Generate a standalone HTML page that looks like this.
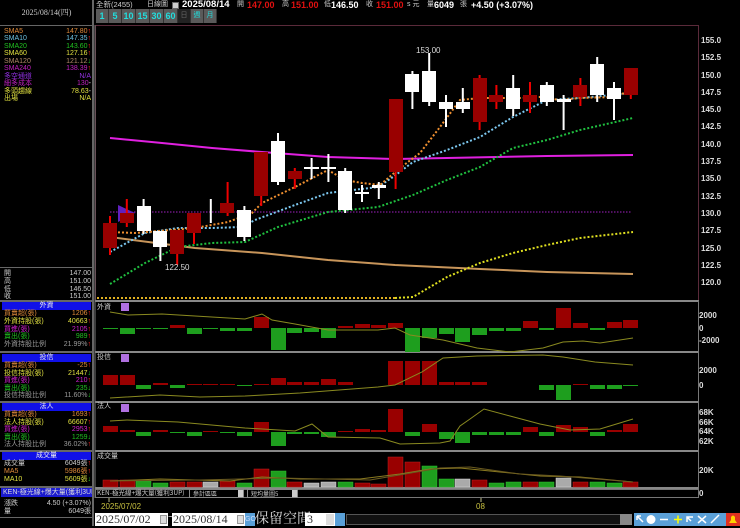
<!DOCTYPE html>
<html><head><meta charset="utf-8">
<style>
*{margin:0;padding:0;box-sizing:border-box}
body{width:740px;height:526px;background:#000;overflow:hidden;position:relative;font-family:"Liberation Sans","Noto Sans CJK TC",sans-serif;color:#ddd}
.a{position:absolute;white-space:nowrap}
.lp{position:absolute;left:0;width:93px;font-size:7px;line-height:7px}
.row{position:absolute;left:2px;right:2px;height:7px}
.row .l{position:absolute;left:2px}
.row .r{position:absolute;right:0}
.up{color:#f22}.dn{color:#2c2}
.bh{position:absolute;left:2px;right:2px;height:8px;background:#1010e8;color:#eee;text-align:center;font-size:7px;line-height:8px}
.btn{position:absolute;top:9px;height:14px;background:#5a5a5a;color:#2dd;font-weight:bold;font-size:9px;line-height:14px;text-align:center;border-right:1px solid #333}
.hv{position:absolute;top:0;font-size:9px;font-weight:bold;line-height:10px;white-space:nowrap}
.hl{position:absolute;top:1px;font-size:7px;color:#ccc;line-height:8px}
</style></head><body>

<div class="a" style="left:0;top:0;width:94px;height:526px;border-right:2px solid #666"></div>
<div class="a" style="left:0;top:25px;width:93px;height:1px;background:#666"></div>
<div class="lp" style="top:9px;text-align:center;color:#ccc;font-size:8px;font-family:'Liberation Serif','Noto Serif CJK SC',serif">2025/08/14(四)</div>

<div class="lp" style="top:0;height:110px">
<div class="row" style="top:28px;color:#e08a3a"><span class="l">SMA5</span><span class="r">147.80<span class="up">↑</span></span></div>
<div class="row" style="top:35px;color:#6cc0e0"><span class="l">SMA10</span><span class="r">147.35<span class="up">↑</span></span></div>
<div class="row" style="top:43px;color:#20c020"><span class="l">SMA20</span><span class="r">143.60<span class="up">↑</span></span></div>
<div class="row" style="top:50px;color:#e0e040"><span class="l">SMA60</span><span class="r">127.16<span class="up">↑</span></span></div>
<div class="row" style="top:58px;color:#b08868"><span class="l">SMA120</span><span class="r">121.12<span class="dn">↓</span></span></div>
<div class="row" style="top:65px;color:#c020c0"><span class="l">SMA240</span><span class="r">138.39<span class="up">↑</span></span></div>
<div class="row" style="top:73px;color:#9030e0"><span class="l">多空通道</span><span class="r">N/A</span></div>
<div class="row" style="top:80px;color:#c020c0"><span class="l">細多成本</span><span class="r">130<span style="color:#ddd">-</span></span></div>
<div class="row" style="top:88px;color:#e0e040"><span class="l">多頭趨線</span><span class="r">78.63<span style="color:#ddd">-</span></span></div>
<div class="row" style="top:95px;color:#e0e040"><span class="l">出場</span><span class="r">N/A</span></div>
</div>

<div class="a" style="left:0;top:267px;width:93px;height:1px;background:#666"></div>
<div class="lp" style="top:0">
<div class="row" style="top:270px;color:#ccc"><span class="l">開</span><span class="r">147.00</span></div>
<div class="row" style="top:278px;color:#ccc"><span class="l">高</span><span class="r">151.00</span></div>
<div class="row" style="top:286px;color:#ccc"><span class="l">低</span><span class="r">146.50</span></div>
<div class="row" style="top:293px;color:#ccc"><span class="l">收</span><span class="r">151.00</span></div>
</div>

<div class="a" style="left:0;top:300px;width:93px;height:2px;background:#666"></div>
<div class="lp" style="top:0">
<div class="bh" style="top:302px">外資</div>
<div class="row" style="top:310px;color:#e08a3a"><span class="l">買賣超(張)</span><span class="r">1206<span class="up">↑</span></span></div>
<div class="row" style="top:318px;color:#e0e040"><span class="l">外資持股(張)</span><span class="r">40663<span class="up">↑</span></span></div>
<div class="row" style="top:326px;color:#d020d0"><span class="l">買進(張)</span><span class="r">2105<span class="up">↑</span></span></div>
<div class="row" style="top:333px;color:#20c020"><span class="l">賣出(張)</span><span class="r">989<span class="up">↑</span></span></div>
<div class="row" style="top:341px;color:#999"><span class="l">外資持股比例</span><span class="r">21.99%<span class="up">↑</span></span></div>
</div>
<div class="a" style="left:0;top:351px;width:93px;height:2px;background:#666"></div>
<div class="lp" style="top:0">
<div class="bh" style="top:354px">投信</div>
<div class="row" style="top:362px;color:#e08a3a"><span class="l">買賣超(張)</span><span class="r">-25<span class="up">↑</span></span></div>
<div class="row" style="top:370px;color:#e0e040"><span class="l">投信持股(張)</span><span class="r">21447<span class="dn">↓</span></span></div>
<div class="row" style="top:377px;color:#d020d0"><span class="l">買進(張)</span><span class="r">210<span class="up">↑</span></span></div>
<div class="row" style="top:385px;color:#20c020"><span class="l">賣出(張)</span><span class="r">235<span class="dn">↓</span></span></div>
<div class="row" style="top:392px;color:#999"><span class="l">投信持股比例</span><span class="r">11.60%<span class="dn">↓</span></span></div>
</div>
<div class="a" style="left:0;top:401px;width:93px;height:2px;background:#666"></div>
<div class="lp" style="top:0">
<div class="bh" style="top:403px">法人</div>
<div class="row" style="top:411px;color:#e08a3a"><span class="l">買賣超(張)</span><span class="r">1693<span class="up">↑</span></span></div>
<div class="row" style="top:419px;color:#e0e040"><span class="l">法人持股(張)</span><span class="r">66607<span class="up">↑</span></span></div>
<div class="row" style="top:426px;color:#d020d0"><span class="l">買進(張)</span><span class="r">2953<span class="up">↑</span></span></div>
<div class="row" style="top:434px;color:#20c020"><span class="l">賣出(張)</span><span class="r">1259<span class="dn">↓</span></span></div>
<div class="row" style="top:441px;color:#999"><span class="l">法人持股比例</span><span class="r">36.02%<span class="up">↑</span></span></div>
</div>
<div class="a" style="left:0;top:450px;width:93px;height:2px;background:#666"></div>
<div class="lp" style="top:0">
<div class="bh" style="top:452px">成交量</div>
<div class="row" style="top:460px;color:#ccc"><span class="l">成交量</span><span class="r">6049張<span class="up">↑</span></span></div>
<div class="row" style="top:468px;color:#e08a3a"><span class="l">MA5</span><span class="r">5986張<span class="up">↑</span></span></div>
<div class="row" style="top:476px;color:#e0e040"><span class="l">MA10</span><span class="r">5609張<span class="dn">↓</span></span></div>
</div>
<div class="a" style="left:0;top:486px;width:93px;height:2px;background:#666"></div>
<div class="lp" style="top:0">
<div class="a" style="left:1px;top:488px;width:91px;height:9px;background:#1a1ad0;color:#ddd;font-size:7px;line-height:9px;padding-left:2px;overflow:hidden">KEN-極光線+爆大量(獲利3UP)</div>
<div class="row" style="top:500px;color:#ccc"><span class="l">漲跌</span><span class="r">4.50 (+3.07%)</span></div>
<div class="row" style="top:508px;color:#ccc"><span class="l">量</span><span class="r">6049張</span></div>
</div>
<div class="a" style="left:0;top:517px;width:93px;height:1px;background:#666"></div>

<!-- header -->
<div class="a" style="left:96px;top:0px;font-size:7.5px;line-height:9px;color:#ccc">全新(2455)</div>
<div class="hl" style="left:147px">日線圖</div>
<div class="a" style="left:172px;top:2px;width:7px;height:7px;background:#ccc;border:1px solid #666"></div>
<div class="hv" style="left:182px;color:#fff;font-size:9.5px">2025/08/14</div>
<div class="hl" style="left:237px">開</div>
<div class="hv" style="left:247px;color:#e01010">147.00</div>
<div class="hl" style="left:282px">高</div>
<div class="hv" style="left:291px;color:#e01010">151.00</div>
<div class="hl" style="left:324px">低</div>
<div class="hv" style="left:331px;color:#fff">146.50</div>
<div class="hl" style="left:366px">收</div>
<div class="hv" style="left:376px;color:#e01010">151.00</div>
<div class="hl" style="left:407px">s 元</div>
<div class="hl" style="left:427px">量</div>
<div class="hv" style="left:434px;color:#fff">6049</div>
<div class="hl" style="left:460px">張</div>
<div class="hv" style="left:471px;color:#fff">+4.50 (+3.07%)</div>

<div class="btn" style="left:96px;width:13px">1</div>
<div class="btn" style="left:109px;width:13px">5</div>
<div class="btn" style="left:122px;width:14px">10</div>
<div class="btn" style="left:136px;width:14px">15</div>
<div class="btn" style="left:150px;width:14px">30</div>
<div class="btn" style="left:164px;width:14px">60</div>
<div class="btn" style="left:178px;width:13px;background:#222;color:#666;font-size:7px;font-weight:normal">日</div>
<div class="btn" style="left:191px;width:13px;font-size:7px;font-weight:normal">週</div>
<div class="btn" style="left:204px;width:13px;font-size:7px;font-weight:normal">月</div>

<svg class="a" style="left:0;top:0" width="740" height="526">
<rect x="95.5" y="25.5" width="603" height="275" fill="none" stroke="#5a2a3a"/>
<line x1="95" y1="301" x2="699" y2="301" stroke="#888" stroke-width="2"/>
<line x1="95" y1="352" x2="699" y2="352" stroke="#888" stroke-width="2"/>
<line x1="95" y1="402" x2="699" y2="402" stroke="#888" stroke-width="2"/>
<line x1="95" y1="451" x2="699" y2="451" stroke="#888" stroke-width="2"/>
<line x1="95" y1="488" x2="699" y2="488" stroke="#888" stroke-width="2"/>
<rect x="95.5" y="489.5" width="603" height="8" fill="none" stroke="#777"/>
<line x1="95" y1="25" x2="95" y2="498" stroke="#777"/>
<line x1="698.5" y1="301" x2="698.5" y2="498" stroke="#777"/>

<polyline fill="none" stroke="#e020e0" stroke-width="2" points="110,138 162,143 212,148 262,152 328,157 395,159 447,158 547,156 633,155"/>
<polyline fill="none" stroke="#c8955a" stroke-width="2" points="110,237 195,248 262,253 328,260 395,265 480,269 547,272 633,274"/>
<line x1="110" y1="212" x2="632" y2="212" stroke="#a020c0" stroke-dasharray="1.5 1.5"/>
<line x1="97" y1="298" x2="395" y2="298" stroke="#e0b020" stroke-width="2" stroke-dasharray="2 2"/>
<polyline fill="none" stroke="#e0e020" stroke-width="2" stroke-dasharray="2 2" points="395,298 413,297 447,277 480,263 513,253 547,245 580,238 633,232"/>
<polyline fill="none" stroke="#20c040" stroke-width="2" stroke-dasharray="2 2" points="110,284 145,263 178,247 212,243 245,242 278,227 328,212 378,207 413,195 447,180 480,167 513,148 547,140 580,130 633,118"/>
<polyline fill="none" stroke="#7cc8f0" stroke-width="2" stroke-dasharray="2 2" points="110,252 145,233 178,228 212,228 242,227 255,220 295,205 328,193 378,187 393,177 413,162 447,150 480,137 513,117 547,100 580,98 633,93"/>
<polyline fill="none" stroke="#f09030" stroke-width="2" stroke-dasharray="2 2" points="110,232 135,233 195,228 228,222 252,213 262,203 295,187 328,170 345,180 362,183 380,185 400,168 420,153 440,127 460,100 480,98 520,98 540,97 560,100 580,98 613,97 633,90"/>
<polygon points="118,205 135,213 118,222" fill="#6020c0"/>

<g stroke-width="2">
<line x1="110" y1="216" x2="110" y2="255" stroke="#e00"/><rect x="103" y="223" width="14" height="25" fill="#990000"/>
<line x1="126.8" y1="199" x2="126.8" y2="227" stroke="#e00"/><rect x="120" y="213" width="14" height="10" fill="#990000"/>
<line x1="143.6" y1="199" x2="143.6" y2="234" stroke="#fff"/><rect x="137" y="206" width="14" height="25" fill="#fff"/>
<line x1="160.4" y1="231" x2="160.4" y2="261" stroke="#fff"/><rect x="153" y="231" width="14" height="16" fill="#fff"/>
<line x1="177.2" y1="230" x2="177.2" y2="265" stroke="#e00"/><rect x="170" y="230" width="14" height="24" fill="#990000"/>
<line x1="194" y1="213" x2="194" y2="244" stroke="#e00"/><rect x="187" y="213" width="14" height="20" fill="#990000"/>
<line x1="210.8" y1="199" x2="210.8" y2="223" stroke="#fff"/>
<line x1="227.6" y1="182" x2="227.6" y2="216" stroke="#e00"/><rect x="220" y="203" width="14" height="10" fill="#990000"/>
<line x1="244.4" y1="206" x2="244.4" y2="241" stroke="#fff"/><rect x="237" y="210" width="14" height="27" fill="#fff"/>
<line x1="261.2" y1="152" x2="261.2" y2="206" stroke="#e00"/><rect x="254" y="152" width="14" height="44" fill="#990000"/>
<line x1="278" y1="133" x2="278" y2="185" stroke="#fff"/><rect x="271" y="141" width="14" height="41" fill="#fff"/>
<line x1="294.8" y1="168" x2="294.8" y2="189" stroke="#e00"/><rect x="288" y="171" width="14" height="8" fill="#990000"/>
<line x1="311.6" y1="158" x2="311.6" y2="179" stroke="#fff"/><rect x="304" y="167" width="15" height="2" fill="#fff"/>
<line x1="328.4" y1="154" x2="328.4" y2="182" stroke="#fff"/><rect x="321" y="167" width="15" height="2" fill="#fff"/>
<line x1="345.2" y1="168" x2="345.2" y2="213" stroke="#fff"/><rect x="338" y="171" width="14" height="39" fill="#fff"/>
<line x1="362" y1="185" x2="362" y2="202" stroke="#fff"/><rect x="355" y="192" width="14" height="2" fill="#fff"/>
<line x1="378.8" y1="182" x2="378.8" y2="199" stroke="#fff"/><rect x="372" y="185" width="14" height="3" fill="#fff"/>
<line x1="395.6" y1="99" x2="395.6" y2="189" stroke="#e00"/><rect x="389" y="99" width="14" height="73" fill="#990000"/>
<line x1="412.4" y1="71" x2="412.4" y2="109" stroke="#fff"/><rect x="405" y="74" width="14" height="18" fill="#fff"/>
<line x1="429.2" y1="53" x2="429.2" y2="106" stroke="#fff"/><rect x="422" y="71" width="14" height="31" fill="#fff"/>
<line x1="446" y1="95" x2="446" y2="127" stroke="#fff"/><rect x="439" y="102" width="14" height="7" fill="#fff"/>
<line x1="462.8" y1="88" x2="462.8" y2="113" stroke="#fff"/><rect x="456" y="102" width="14" height="7" fill="#fff"/>
<line x1="479.6" y1="75" x2="479.6" y2="130" stroke="#e00"/><rect x="473" y="78" width="14" height="44" fill="#990000"/>
<line x1="496.4" y1="85" x2="496.4" y2="109" stroke="#e00"/><rect x="489" y="95" width="14" height="7" fill="#990000"/>
<line x1="513.2" y1="75" x2="513.2" y2="116" stroke="#fff"/><rect x="506" y="88" width="14" height="21" fill="#fff"/>
<line x1="530" y1="82" x2="530" y2="113" stroke="#e00"/><rect x="523" y="95" width="14" height="7" fill="#990000"/>
<line x1="546.8" y1="82" x2="546.8" y2="106" stroke="#fff"/><rect x="540" y="85" width="14" height="17" fill="#fff"/>
<line x1="563.6" y1="95" x2="563.6" y2="130" stroke="#fff"/><rect x="557" y="99" width="14" height="3" fill="#fff"/>
<line x1="580.4" y1="78" x2="580.4" y2="106" stroke="#e00"/><rect x="573" y="85" width="14" height="12" fill="#990000"/>
<line x1="597.2" y1="57" x2="597.2" y2="102" stroke="#fff"/><rect x="590" y="64" width="14" height="31" fill="#fff"/>
<line x1="614" y1="82" x2="614" y2="120" stroke="#fff"/><rect x="607" y="88" width="14" height="11" fill="#fff"/>
<line x1="630.8" y1="68" x2="630.8" y2="99" stroke="#e00"/><rect x="624" y="68" width="14" height="27" fill="#990000"/>
</g>
<text x="416" y="53" fill="#ddd" font-size="8" font-family="Liberation Sans">153.00</text>
<text x="165" y="270" fill="#ddd" font-size="8" font-family="Liberation Sans">122.50</text>

<g fill="#1e9e1e">
<rect x="103" y="328" width="15" height="1"/><rect x="120" y="328" width="15" height="6"/><rect x="136" y="328" width="15" height="1"/><rect x="153" y="328" width="15" height="1"/>
<rect x="187" y="328" width="15" height="6"/><rect x="203" y="328" width="15" height="1"/><rect x="220" y="328" width="15" height="3"/><rect x="237" y="328" width="15" height="3"/>
<rect x="271" y="328" width="15" height="22"/><rect x="287" y="328" width="15" height="5"/><rect x="304" y="328" width="15" height="4"/><rect x="321" y="328" width="15" height="10"/>
<rect x="405" y="328" width="15" height="24"/><rect x="422" y="328" width="15" height="10"/><rect x="439" y="328" width="15" height="6"/><rect x="455" y="328" width="15" height="14"/>
<rect x="472" y="328" width="15" height="7"/><rect x="489" y="328" width="15" height="3"/><rect x="506" y="328" width="15" height="3"/><rect x="539" y="328" width="15" height="2"/><rect x="590" y="328" width="15" height="2"/>
</g>
<g fill="#990000">
<rect x="170" y="325" width="15" height="3"/><rect x="254" y="317" width="15" height="11"/><rect x="338" y="326" width="15" height="2"/><rect x="355" y="324" width="15" height="4"/><rect x="371" y="325" width="15" height="3"/><rect x="388" y="323" width="15" height="5"/>
<rect x="523" y="321" width="15" height="7"/><rect x="556" y="308" width="15" height="20"/><rect x="573" y="323" width="15" height="5"/><rect x="607" y="322" width="15" height="6"/><rect x="623" y="320" width="15" height="8"/>
</g>
<polyline fill="none" stroke="#8a8a20" points="110,312 128,315 162,314 195,316 245,319 262,314 272,320 295,324 328,330 378,330 395,328 410,335 443,340 477,348 510,352 543,348 563,342 583,341 600,343 633,338"/>
<text x="97" y="309" fill="#ccc" font-size="7" font-family="Noto Sans CJK TC">外資</text>
<rect x="121" y="303" width="8" height="8" fill="#b070e0"/>

<g fill="#990000">
<rect x="103" y="375" width="15" height="10"/><rect x="120" y="375" width="15" height="10"/><rect x="153" y="383" width="15" height="2"/><rect x="187" y="384" width="15" height="1"/><rect x="203" y="384" width="15" height="1"/><rect x="220" y="384" width="15" height="1"/><rect x="254" y="384" width="15" height="1"/>
<rect x="271" y="378" width="15" height="7"/><rect x="287" y="382" width="15" height="3"/><rect x="304" y="382" width="15" height="3"/><rect x="321" y="379" width="15" height="6"/><rect x="338" y="382" width="15" height="3"/>
<rect x="388" y="361" width="15" height="24"/><rect x="405" y="361" width="15" height="24"/><rect x="422" y="361" width="15" height="24"/><rect x="439" y="382" width="15" height="3"/><rect x="455" y="382" width="15" height="3"/><rect x="472" y="382" width="15" height="3"/><rect x="573" y="384" width="15" height="1"/>
</g>
<g fill="#1e9e1e">
<rect x="136" y="385" width="15" height="4"/><rect x="170" y="385" width="15" height="3"/><rect x="237" y="385" width="15" height="1"/><rect x="539" y="385" width="15" height="5"/><rect x="556" y="385" width="15" height="15"/><rect x="590" y="385" width="15" height="4"/><rect x="607" y="385" width="15" height="4"/><rect x="623" y="385" width="15" height="1"/>
</g>
<polyline fill="none" stroke="#8a8a20" points="110,398 160,395 200,397 245,396 300,393 378,387 395,385 422,372 443,358 477,356 543,355 563,357 595,362 633,365"/>
<text x="97" y="359" fill="#ccc" font-size="7" font-family="Noto Sans CJK TC">投信</text>
<rect x="121" y="354" width="8" height="8" fill="#b070e0"/>

<g fill="#990000">
<rect x="103" y="426" width="15" height="6"/><rect x="120" y="430" width="15" height="2"/><rect x="153" y="430" width="15" height="2"/><rect x="203" y="431" width="15" height="1"/><rect x="254" y="422" width="15" height="10"/>
<rect x="338" y="431" width="15" height="1"/><rect x="355" y="429" width="15" height="3"/><rect x="371" y="430" width="15" height="2"/><rect x="388" y="409" width="15" height="23"/><rect x="422" y="424" width="15" height="8"/>
<rect x="523" y="427" width="15" height="5"/><rect x="556" y="425" width="15" height="7"/><rect x="573" y="427" width="15" height="5"/><rect x="607" y="430" width="15" height="2"/><rect x="623" y="424" width="15" height="8"/>
</g>
<g fill="#1e9e1e">
<rect x="136" y="432" width="15" height="4"/><rect x="170" y="432" width="15" height="1"/><rect x="187" y="432" width="15" height="4"/><rect x="220" y="432" width="15" height="1"/><rect x="237" y="432" width="15" height="4"/>
<rect x="271" y="432" width="15" height="14"/><rect x="287" y="432" width="15" height="2"/><rect x="304" y="432" width="15" height="2"/><rect x="321" y="432" width="15" height="5"/><rect x="405" y="432" width="15" height="4"/>
<rect x="439" y="432" width="15" height="7"/><rect x="455" y="432" width="15" height="11"/><rect x="472" y="432" width="15" height="3"/><rect x="489" y="432" width="15" height="3"/><rect x="506" y="432" width="15" height="3"/><rect x="539" y="432" width="15" height="4"/><rect x="590" y="432" width="15" height="4"/>
</g>
<polyline fill="none" stroke="#8a8a20" points="110,421 127,420 178,422 245,428 295,431 312,424 328,437 380,438 400,444 440,443 450,441 460,426 470,419 484,409 510,416 540,424 570,430 600,429 633,419"/>
<text x="97" y="408" fill="#ccc" font-size="7" font-family="Noto Sans CJK TC">法人</text>
<rect x="121" y="404" width="8" height="8" fill="#b070e0"/>

<g fill="#990000" stroke="#c02020" stroke-width="0.5">
<rect x="103" y="480" width="15" height="7"/><rect x="120" y="480" width="15" height="7"/><rect x="170" y="482" width="15" height="5"/><rect x="187" y="482" width="15" height="5"/><rect x="220" y="481" width="15" height="6"/>
<rect x="254" y="469" width="15" height="18"/><rect x="287" y="482" width="15" height="5"/><rect x="355" y="483" width="15" height="4"/><rect x="371" y="484" width="15" height="3"/>
<rect x="388" y="457" width="15" height="30"/><rect x="405" y="462" width="15" height="25"/><rect x="472" y="480" width="15" height="7"/><rect x="523" y="482" width="15" height="5"/><rect x="573" y="482" width="15" height="5"/><rect x="623" y="482" width="15" height="5"/>
</g>
<g fill="#1e9e1e" stroke="#30c030" stroke-width="0.5">
<rect x="136" y="481" width="15" height="6"/><rect x="153" y="483" width="15" height="4"/><rect x="237" y="483" width="15" height="4"/><rect x="271" y="471" width="15" height="16"/><rect x="338" y="482" width="15" height="5"/>
<rect x="422" y="466" width="15" height="21"/><rect x="439" y="479" width="15" height="8"/><rect x="489" y="483" width="15" height="4"/><rect x="506" y="482" width="15" height="5"/><rect x="539" y="482" width="15" height="5"/><rect x="590" y="482" width="15" height="5"/><rect x="607" y="483" width="15" height="4"/>
</g>
<g fill="#aaa" stroke="#ddd" stroke-width="0.5">
<rect x="203" y="482" width="15" height="5"/><rect x="304" y="483" width="15" height="4"/><rect x="321" y="482" width="15" height="5"/><rect x="455" y="479" width="15" height="8"/><rect x="556" y="478" width="15" height="9"/>
</g>
<polyline fill="none" stroke="#8a7a20" points="110,481 160,479 230,481 262,477 300,479 360,479 400,474 430,469 460,468 500,472 540,476 580,477 633,482"/>
<polyline fill="none" stroke="#6a5a20" points="110,481 200,480 280,478 370,480 440,468 470,467 520,474 560,476 633,482"/>
<text x="97" y="458" fill="#ccc" font-size="7" font-family="Noto Sans CJK TC">成交量</text>

<g fill="#ddd" font-size="8" font-weight="bold" font-family="Liberation Sans">
<text x="701" y="43">155.0</text><text x="701" y="60">152.5</text><text x="701" y="78">150.0</text><text x="701" y="95">147.5</text><text x="701" y="112">145.0</text><text x="701" y="129">142.5</text><text x="701" y="147">140.0</text><text x="701" y="164">137.5</text><text x="701" y="181">135.0</text><text x="701" y="199">132.5</text><text x="701" y="216">130.0</text><text x="701" y="233">127.5</text><text x="701" y="251">125.0</text><text x="701" y="268">122.5</text><text x="701" y="285">120.0</text>
<text x="699" y="318">2000</text><text x="699" y="331">0</text><text x="699" y="343">-2000</text>
<text x="699" y="373">2000</text><text x="699" y="388">0</text>
<text x="699" y="415">68K</text><text x="699" y="425">66K</text><text x="699" y="434">64K</text><text x="699" y="444">62K</text>
<text x="699" y="473">20K</text><text x="699" y="496">0</text>
</g>

<text x="97" y="495" fill="#ccc" font-size="6.5" font-family="Noto Sans CJK TC">KEN-極光線+爆大量(獲利3UP)</text>
<rect x="189.5" y="489.5" width="54" height="8" fill="#000" stroke="#888"/>
<text x="193" y="496" fill="#ccc" font-size="6" font-family="Noto Sans CJK TC">參計區區</text>
<rect x="238" y="490" width="5" height="7" fill="#ccc"/>
<rect x="247.5" y="489.5" width="50" height="8" fill="#000" stroke="#888"/>
<text x="251" y="496" fill="#ccc" font-size="6" font-family="Noto Sans CJK TC">短均量圖5</text>
<rect x="292" y="490" width="5" height="7" fill="#ccc"/>
<line x1="109" y1="498" x2="109" y2="502" stroke="#bb8"/>
<text x="101" y="509" fill="#c8c040" font-size="8" font-family="Liberation Sans">2025/07/02</text>
<line x1="481" y1="498" x2="481" y2="502" stroke="#bb8"/>
<text x="476" y="509" fill="#c8c040" font-size="8" font-family="Liberation Sans">08</text>
</svg>

<div class="a" style="left:95px;top:513px;width:73px;height:13px;background:#fff;color:#333;font:12px/13px 'Liberation Serif',serif;padding-left:1px">2025/07/02</div>
<div class="a" style="left:160px;top:515px;width:7px;height:9px;background:#ddd;border:1px solid #999"></div>
<div class="a" style="left:168px;top:512px;color:#ddd;font-size:10px">~</div>
<div class="a" style="left:172px;top:513px;width:73px;height:13px;background:#fff;color:#333;font:12px/13px 'Liberation Serif',serif;padding-left:1px">2025/08/14</div>
<div class="a" style="left:237px;top:515px;width:7px;height:9px;background:#ddd;border:1px solid #999"></div>
<div class="a" style="left:245px;top:513px;width:10px;height:13px;background:#5aa0d8;color:#cdf;font-size:7px;line-height:13px">GO</div>
<div class="a" style="left:255px;top:511px;color:#ddd;font:14px/15px 'Noto Serif CJK SC',serif">保留空間</div>
<div class="a" style="left:305px;top:513px;width:30px;height:13px;background:#fff;color:#333;font:12px/13px 'Liberation Serif',serif;padding-left:2px">3</div>
<div class="a" style="left:326px;top:514px;width:8px;height:11px;background:#ddd"></div>
<div class="a" style="left:335px;top:513px;width:10px;height:13px;background:#5aa0d8"></div>
<div class="a" style="left:346px;top:514px;width:286px;height:11px;background:#111;border:1px solid #555"></div>
<div class="a" style="left:620px;top:514px;width:12px;height:11px;background:#888"></div>
<div class="a" style="left:634px;top:513px;width:106px;height:13px;background:#5aa0d8"></div>
<svg class="a" style="left:634px;top:513px" width="106" height="13">
<g stroke="#fff" stroke-width="1.5" fill="none">
<path d="M3 3 L9 9 M3 3 L3 7 M3 3 L7 3"/>
<circle cx="17" cy="6.5" r="4.5" fill="#fff" stroke="none"/>
<path d="M26 6.5 L34 6.5"/>
<path d="M40 6.5 L48 6.5 M44 2.5 L44 10.5" stroke="#ff0"/>
<path d="M53 9 L53 4 L59 4 M53 4 L57 8"/>
<path d="M64 3 L72 10 M72 3 L64 10"/>
<path d="M77 10 L85 2"/>
</g>
<rect x="92" y="0" width="14" height="13" fill="#e03020"/>
<path d="M95 10 L103 10 L101 7 L101 4 Q99 1 97 4 L97 7 Z" fill="#ffd000"/>
</svg>
</body></html>
